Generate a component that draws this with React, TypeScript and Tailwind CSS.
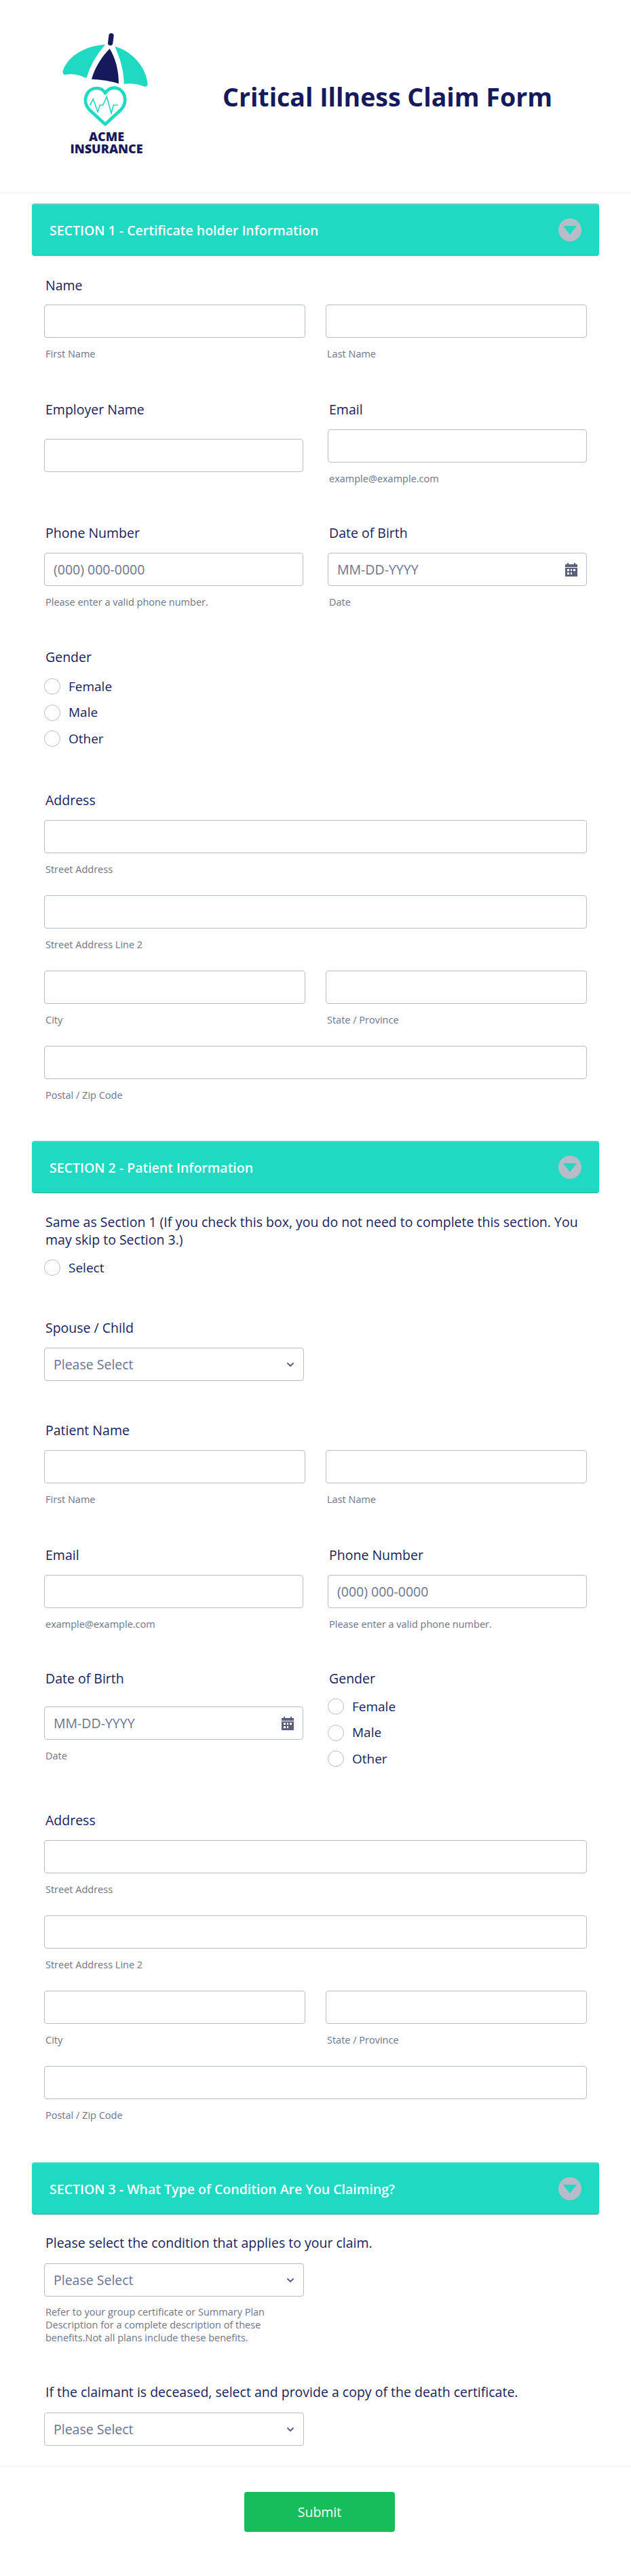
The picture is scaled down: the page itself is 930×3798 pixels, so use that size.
import React from 'react'
import { ChevronDown } from 'lucide-react'

const labelCls = 'block text-[19.5px] leading-[24px] text-[#191d5c]'
const subCls = 'block text-[14.5px] leading-[18px] text-[#6f7488]'
const boxCls = 'h-[49px] rounded-[4px] border border-[#b8bdc9] bg-white'

function Logo() {
  return (
    <svg width="200" height="170" viewBox="0 0 600 510" className="block">
      <path d="M345 138C260 140 175 190 157 258Q158 272 172 270Q215 262 262 286Q285 205 345 138Z" fill="#1fd9c2" />
      <path d="M365 155C325 195 297 245 285 290Q350 292 405 310C405 250 390 195 365 155Z" fill="#161a5c" />
      <path d="M388 146C450 160 525 225 533 312Q530 327 515 322Q475 305 428 311C428 250 410 195 388 146Z" fill="#1fd9c2" />
      <path d="M372 98L368 130" stroke="#161a5c" strokeWidth="22" strokeLinecap="round" fill="none" />
      <path d="M345 490L275 425C240 385 262 330 310 330Q335 332 345 352Q358 330 385 328C430 330 450 385 415 425Z" stroke="#1fd9c2" strokeWidth="14" strokeLinejoin="round" fill="none" />
      <path d="M278 405L292 378L312 435L322 405L335 405L352 368L372 440L382 405L402 405" stroke="#1fd9c2" strokeWidth="5" fill="none" />
    </svg>
  )
}

function CalendarIcon() {
  return (
    <svg width="18" height="20" viewBox="0 0 18 20" fill="#5b6178">
      <rect x="3" y="0" width="2" height="3" />
      <rect x="13" y="0" width="2" height="3" />
      <path d="M0 2h18v4H0z" />
      <path fillRule="evenodd" d="M0 7h18v13H0zM3 9v3h3V9zM8 9v3h2V9zM12 9v3h3V9zM3 14v3h3v-3zM8 14v3h2v-3z" />
    </svg>
  )
}

function SectionHeader({ title }: { title: string }) {
  return (
    <div className="mx-[47px] flex h-[77px] items-center justify-between rounded-[4px] border border-t-2 border-[#1fd9c2] border-t-[#5fd0c2] border-b-[#1cb3a1] bg-[#1fd9c2] pl-[25px] pr-[25px] shadow-[0_1px_2px_rgba(0,0,0,0.15)]">
      <span className="pt-[2px] text-[19.5px] font-semibold text-white">{title}</span>
      <span className="flex h-[34px] w-[34px] items-center justify-center rounded-full bg-[#b8bcc9]">
        <svg width="20" height="13" viewBox="0 0 20 13"><path d="M0 0h20L10 13z" fill="#1fd9c2" /></svg>
      </span>
    </div>
  )
}

function TextBox({ placeholder, icon }: { placeholder?: string; icon?: boolean }) {
  return (
    <div className={`${boxCls} flex items-center justify-between pl-[13px] pr-[13px] text-[19.5px] text-[#6c7393]`}>
      <span>{placeholder}</span>
      {icon && <CalendarIcon />}
    </div>
  )
}

function SelectBox() {
  return (
    <div className={`${boxCls} flex w-[383px] items-center justify-between pl-[13px] pr-[11px] text-[19.5px] text-[#6c7393]`}>
      <span>Please Select</span>
      <ChevronDown size={16} strokeWidth={3} className="text-[#5b6178]" />
    </div>
  )
}

function Sub({ children }: { children: React.ReactNode }) {
  return <span className={`${subCls} mt-[15px] pl-[2px]`}>{children}</span>
}

function RadioItem({ label }: { label: string }) {
  return (
    <div className="flex h-[24px] items-center gap-[12px]">
      <span className="h-[24px] w-[24px] rounded-full border border-[#b8bdc9] bg-white" />
      <span className="text-[19px] text-[#191d5c]">{label}</span>
    </div>
  )
}

function RadioGroup({ items }: { items: string[] }) {
  return (
    <div className="flex flex-col gap-[14.5px]">
      {items.map(item => <RadioItem key={item} label={item} />)}
    </div>
  )
}

function AddressBlock() {
  return (
    <>
      <label className={`${labelCls} pl-[2px]`}>Address</label>
      <div className="mt-[17px]"><TextBox /><Sub>Street Address</Sub></div>
      <div className="mt-[29px]"><TextBox /><Sub>Street Address Line 2</Sub></div>
      <div className="mt-[29px] grid grid-cols-2 gap-[30px]">
        <div><TextBox /><Sub>City</Sub></div>
        <div><TextBox /><Sub>State / Province</Sub></div>
      </div>
      <div className="mt-[29px]"><TextBox /><Sub>Postal / Zip Code</Sub></div>
    </>
  )
}

export default function App() {
  return (
    <div className="h-[3798px] w-[930px] overflow-hidden bg-white font-['Open_Sans','Liberation_Sans',sans-serif]">
      {/* Header */}
      <div className="flex h-[285px] border-b border-[#eef1f4] pl-[40px] pt-[20px]">
        <div className="w-[288px]">
          <Logo />
          <div className="ml-[17px] mt-[2px] w-[200px] text-center text-[18px] font-extrabold leading-[18px] text-[#161a5c]">
            ACME<br />INSURANCE
          </div>
        </div>
        <h1 className="mt-[98px] text-[37.5px] font-bold leading-[50px] text-[#161a5c]">Critical Illness Claim Form</h1>
      </div>

      {/* Section 1 */}
      <div className="mt-[15px]"><SectionHeader title="SECTION 1 - Certificate holder Information" /></div>
      <div className="ml-[65px] w-[800px]">
        <label className={`${labelCls} mt-[32px] pl-[2px]`}>Name</label>
        <div className="mt-[16px] grid grid-cols-2 gap-[30px]">
          <div><TextBox /><Sub>First Name</Sub></div>
          <div><TextBox /><Sub>Last Name</Sub></div>
        </div>

        <div className="mt-[61px] grid grid-cols-2 gap-[36px]">
          <div>
            <label className={`${labelCls} pl-[2px]`}>Employer Name</label>
            <div className="mt-[31px]"><TextBox /></div>
          </div>
          <div>
            <label className={`${labelCls} pl-[2px]`}>Email</label>
            <div className="mt-[17px]"><TextBox /><Sub>example@example.com</Sub></div>
          </div>
        </div>

        <div className="mt-[59px] grid grid-cols-2 gap-[36px]">
          <div>
            <label className={`${labelCls} pl-[2px]`}>Phone Number</label>
            <div className="mt-[17px]"><TextBox placeholder="(000) 000-0000" /><Sub>Please enter a valid phone number.</Sub></div>
          </div>
          <div>
            <label className={`${labelCls} pl-[2px]`}>Date of Birth</label>
            <div className="mt-[17px]"><TextBox placeholder="MM-DD-YYYY" icon /><Sub>Date</Sub></div>
          </div>
        </div>

        <label className={`${labelCls} mt-[60px] pl-[2px]`}>Gender</label>
        <div className="mt-[19px]"><RadioGroup items={['Female', 'Male', 'Other']} /></div>

        <div className="mt-[67px]"><AddressBlock /></div>
      </div>

      {/* Section 2 */}
      <div className="mt-[58px]"><SectionHeader title="SECTION 2 - Patient Information" /></div>
      <div className="ml-[65px] w-[800px]">
        <label className={`${labelCls} mt-[30px] pl-[2px] leading-[26px]`}>
          Same as Section 1 (If you check this box, you do not need to complete this section. You may skip to Section 3.)
        </label>
        <div className="mt-[16px]"><RadioItem label="Select" /></div>

        <label className={`${labelCls} mt-[65px] pl-[2px]`}>Spouse / Child</label>
        <div className="mt-[17px]"><SelectBox /></div>

        <label className={`${labelCls} mt-[61px] pl-[2px]`}>Patient Name</label>
        <div className="mt-[17px] grid grid-cols-2 gap-[30px]">
          <div><TextBox /><Sub>First Name</Sub></div>
          <div><TextBox /><Sub>Last Name</Sub></div>
        </div>

        <div className="mt-[61px] grid grid-cols-2 gap-[36px]">
          <div>
            <label className={`${labelCls} pl-[2px]`}>Email</label>
            <div className="mt-[17px]"><TextBox /><Sub>example@example.com</Sub></div>
          </div>
          <div>
            <label className={`${labelCls} pl-[2px]`}>Phone Number</label>
            <div className="mt-[17px]"><TextBox placeholder="(000) 000-0000" /><Sub>Please enter a valid phone number.</Sub></div>
          </div>
        </div>

        <div className="mt-[59px] grid grid-cols-2 gap-[36px]">
          <div>
            <label className={`${labelCls} pl-[2px]`}>Date of Birth</label>
            <div className="mt-[29px]"><TextBox placeholder="MM-DD-YYYY" icon /><Sub>Date</Sub></div>
          </div>
          <div>
            <label className={`${labelCls} pl-[2px]`}>Gender</label>
            <div className="mt-[17px]"><RadioGroup items={['Female', 'Male', 'Other']} /></div>
          </div>
        </div>

        <div className="mt-[67px]"><AddressBlock /></div>
      </div>

      {/* Section 3 */}
      <div className="mt-[60px]"><SectionHeader title="SECTION 3 - What Type of Condition Are You Claiming?" /></div>
      <div className="ml-[65px] w-[800px]">
        <label className={`${labelCls} mt-[30px] pl-[2px]`}>Please select the condition that applies to your claim.</label>
        <div className="mt-[18px]"><SelectBox /></div>
        <span className={`${subCls} mt-[13px] w-[350px] pl-[2px] leading-[19px]`}>
          Refer to your group certificate or Summary Plan Description for a complete description of these benefits.Not all plans include these benefits.
        </span>
        <label className={`${labelCls} mt-[59px] pl-[2px]`}>If the claimant is deceased, select and provide a copy of the death certificate.</label>
        <div className="mt-[18px]"><SelectBox /></div>
      </div>

      {/* Submit */}
      <div className="mt-[30px] border-t border-[#eef1f4] pt-[37px]">
        <button className="ml-[360px] block h-[59px] w-[222px] rounded-[4px] bg-[#18bd5b] text-[19.5px] text-white">Submit</button>
      </div>
    </div>
  )
}
